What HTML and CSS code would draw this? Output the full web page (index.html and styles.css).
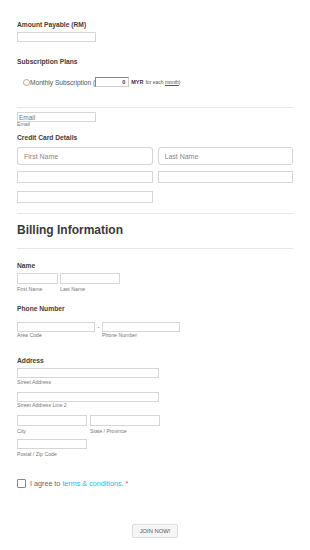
FILE: index.html
```html
<!DOCTYPE html>
<html lang="en">
<head>
  <meta charset="UTF-8">
  <meta name="viewport" content="width=device-width, initial-scale=1.0">
  <title>Join</title>
  <link rel="stylesheet" href="styles.css">
</head>
<body>

<div class="form">
  <div class="label">Amount Payable (RM)</div>
  <input type="text" class="box amount">

  <div class="label plans">Subscription Plans</div>
  <div class="plan-row">
    <span class="radio"></span>
    <span class="plan-text">Monthly Subscription (</span>
    <span class="qty">0</span>
    <span class="myr">MYR</span>
    <span class="small">for each <u>month</u>)</span>
  </div>

  <hr class="rule first-rule">

  <input type="text" class="box email" placeholder="Email">
  <div class="sub">Email</div>

  <div class="label cc">Credit Card Details</div>
  <div class="cc-row big">
    <input type="text" class="box round" placeholder="First Name">
    <input type="text" class="box round" placeholder="Last Name">
  </div>
  <div class="cc-row mid">
    <input type="text" class="box">
    <input type="text" class="box">
  </div>
  <div class="cc-row third">
    <input type="text" class="box">
  </div>

  <hr class="rule before-title">
  <h2 class="title">Billing Information</h2>
  <hr class="rule after-title">

  <div class="label name">Name</div>
  <div class="pair names">
    <div class="col">
      <input type="text" class="box first-name">
      <div class="sub">First Name</div>
    </div>
    <div class="col">
      <input type="text" class="box last-name">
      <div class="sub">Last Name</div>
    </div>
  </div>

  <div class="label phone">Phone Number</div>
  <div class="pair phones">
    <div class="col">
      <input type="text" class="box area">
      <div class="sub">Area Code</div>
    </div>
    <span class="dash">-</span>
    <div class="col">
      <input type="text" class="box area">
      <div class="sub">Phone Number</div>
    </div>
  </div>

  <div class="label address">Address</div>
  <input type="text" class="box street">
  <div class="sub">Street Address</div>
  <input type="text" class="box street line2">
  <div class="sub">Street Address Line 2</div>
  <div class="pair cities">
    <div class="col">
      <input type="text" class="box city">
      <div class="sub">City</div>
    </div>
    <div class="col">
      <input type="text" class="box city">
      <div class="sub">State / Province</div>
    </div>
  </div>
  <input type="text" class="box postal">
  <div class="sub">Postal / Zip Code</div>

  <div class="agree">
    <span class="check"></span>
    <span>I agree to <a href="#">terms &amp; conditions</a>. <span class="req">*</span></span>
  </div>

  <div class="submit-row">
    <button class="join">JOIN NOW!</button>
  </div>
</div>

</body>
</html>
```

FILE: styles.css
```css
body {
  font-family: "Liberation Sans", Arial, sans-serif;
  margin: 0;
  padding: 0;
  background-color: #fff;
}

.form {
  padding: 21px 17px 0 17px;
}

.label {
  font-size: 6.7px;
  line-height: 8px;
  font-weight: bold;
  color: #3d3d3d;
}

.box {
  display: block;
  box-sizing: border-box;
  height: 10px;
  margin: 0;
  padding: 0 2px;
  border: 1px solid #d6d6d6;
  background-color: #fff;
  font-family: inherit;
  font-size: 6px;
  outline: none;
}

.box::placeholder {
  color: #777;
}

.amount {
  width: 79px;
  margin-top: 3px;
}

.plans {
  margin-top: 16px;
}

.plan-row {
  display: flex;
  align-items: center;
  height: 10px;
  margin-top: 11px;
  padding-left: 6px;
  color: #555;
}

.radio {
  width: 5px;
  height: 5px;
  border: 1px solid #aaa;
  border-radius: 50%;
}

.plan-text {
  font-size: 6.6px;
}

.qty {
  box-sizing: border-box;
  width: 34px;
  height: 10px;
  border: 1px solid #ccc;
  border-top-color: #888;
  border-left-color: #888;
  font-size: 5.5px;
  font-weight: bold;
  text-align: right;
  padding-right: 3px;
  line-height: 8px;
  color: #333;
}

.myr {
  font-size: 5.5px;
  font-weight: bold;
  margin-left: 2px;
  color: #333;
}

.small {
  font-size: 5px;
  margin-left: 2px;
}

.rule {
  border: 0;
  border-top: 1px solid #e6e6e6;
  margin: 0;
}

.first-rule {
  margin-top: 20px;
}

.email {
  width: 79px;
  margin-top: 4px;
  font-size: 6.5px;
  padding-left: 1px;
}

.sub {
  font-size: 5.2px;
  line-height: 5px;
  color: #777;
  white-space: nowrap;
}

.cc {
  margin-top: 7px;
}

.cc-row {
  display: flex;
  gap: 5px;
}

.cc-row .box {
  width: 136px;
}

.big {
  margin-top: 5px;
}

.big .box {
  height: 18px;
  padding-left: 6px;
  font-size: 7px;
}

.round {
  border-radius: 3px;
  box-shadow: 0 0 1px rgba(0, 0, 0, 0.06);
}

.round::placeholder {
  color: #888;
}

.mid {
  margin-top: 6px;
}

.mid .box {
  height: 12px;
}

.third {
  margin-top: 8px;
}

.third .box {
  height: 12px;
}

.before-title {
  margin-top: 10px;
}

.title {
  margin: 8px 0 0 0;
  font-size: 12px;
  line-height: 16px;
  font-weight: bold;
  color: #3a3a3a;
}

.after-title {
  margin-top: 10px;
}

.name {
  margin-top: 13px;
}

.pair {
  display: flex;
  align-items: flex-start;
}

.names {
  gap: 2px;
  margin-top: 3px;
}

.names .box {
  height: 11px;
  margin-bottom: 3px;
}

.first-name {
  width: 41px;
}

.last-name {
  width: 60px;
}

.phone {
  margin-top: 13px;
}

.phones {
  margin-top: 9px;
}

.area {
  width: 78px;
  margin-bottom: 1px;
}

.dash {
  font-size: 6px;
  line-height: 10px;
  color: #666;
  width: 7px;
  text-align: center;
}

.address {
  margin-top: 19px;
}

.street {
  width: 142px;
  margin-top: 3px;
  margin-bottom: 2px;
}

.line2 {
  margin-top: 7px;
  margin-bottom: 1px;
}

.cities {
  gap: 3px;
  margin-top: 7px;
}

.city {
  width: 70px;
  height: 11px;
  margin-bottom: 3px;
}

.postal {
  width: 70px;
  margin-top: 5px;
  margin-bottom: 3px;
}

.agree {
  display: flex;
  align-items: center;
  gap: 4px;
  margin-top: 22px;
  font-size: 7.2px;
  color: #666;
}

.check {
  box-sizing: border-box;
  width: 9px;
  height: 9px;
  border: 1px solid #888;
  border-radius: 1px;
}

.agree a {
  color: #2ab4ea;
  text-decoration: none;
}

.req {
  color: #e23b3b;
}

.submit-row {
  margin-top: 31px;
  text-align: center;
}

.join {
  box-sizing: border-box;
  width: 46px;
  height: 14px;
  padding: 0;
  font-family: inherit;
  font-size: 5.8px;
  color: #555;
  background-color: #f6f6f6;
  border: 1px solid #ddd;
  border-radius: 2px;
  box-shadow: 0 1px 1px rgba(0, 0, 0, 0.05);
}
```
